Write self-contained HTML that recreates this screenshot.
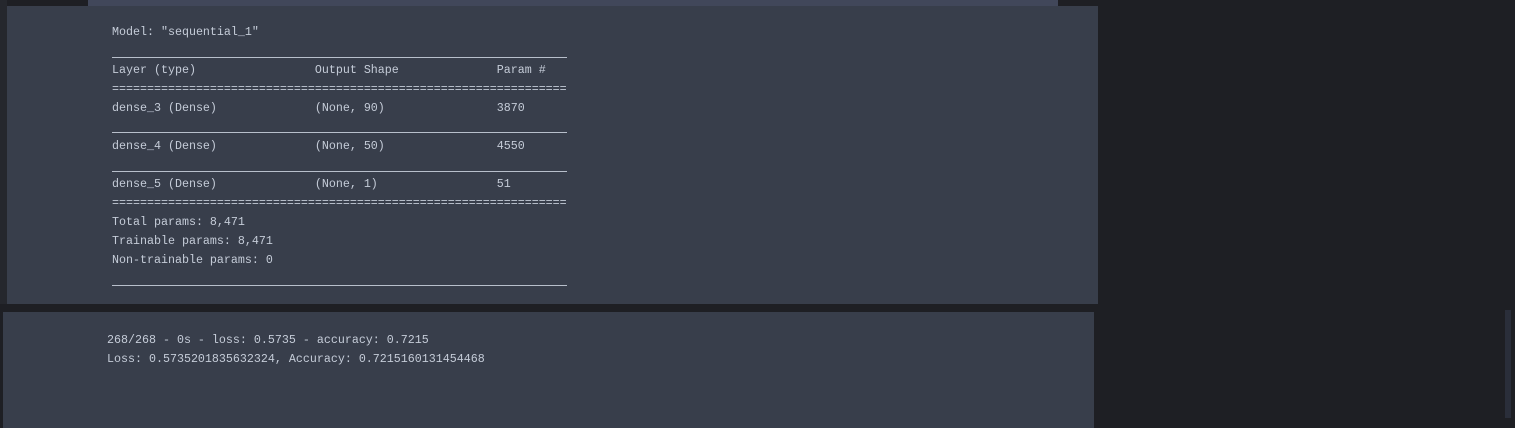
<!DOCTYPE html>
<html><head><meta charset="utf-8"><style>
html,body{margin:0;padding:0;width:1515px;height:428px;overflow:hidden;background:#1e1f24;position:relative}
.p{position:absolute;background:#383e4b}
.t{position:absolute;font-family:"Liberation Mono",monospace;font-size:11.67px;line-height:14px;color:#c5ccd8;white-space:pre}
.r{position:absolute;left:112px;width:455px;height:1px;background:#b8bfcb}
</style></head><body>
<div class="p" style="left:0;top:0;width:7px;height:305px;background:#25272d"></div>
<div class="p" style="left:88px;top:0;width:970px;height:6px;background:#41475a"></div>
<div class="p" style="left:7px;top:6px;width:1091px;height:298px"></div>
<div class="p" style="left:0;top:304px;width:1100px;height:8px;background:#1e1f24"></div>
<div class="p" style="left:3px;top:312px;width:1091px;height:116px"></div>
<div class="p" style="left:1505px;top:310px;width:6px;height:108px;background:#2a2e3a"></div>

<div class="t" style="left:112px;top:25px">Model: "sequential_1"</div>
<div class="r" style="top:57px"></div>
<div class="t" style="left:112px;top:63px">Layer (type)                 Output Shape              Param #</div>
<div class="t" style="left:112px;top:82px">=================================================================</div>
<div class="t" style="left:112px;top:101px">dense_3 (Dense)              (None, 90)                3870</div>
<div class="r" style="top:132px"></div>
<div class="t" style="left:112px;top:139px">dense_4 (Dense)              (None, 50)                4550</div>
<div class="r" style="top:171px"></div>
<div class="t" style="left:112px;top:177px">dense_5 (Dense)              (None, 1)                 51</div>
<div class="t" style="left:112px;top:196px">=================================================================</div>
<div class="t" style="left:112px;top:215px">Total params: 8,471</div>
<div class="t" style="left:112px;top:234px">Trainable params: 8,471</div>
<div class="t" style="left:112px;top:253px">Non-trainable params: 0</div>
<div class="r" style="top:285px"></div>

<div class="t" style="left:107px;top:333px">268/268 - 0s - loss: 0.5735 - accuracy: 0.7215</div>
<div class="t" style="left:107px;top:352px">Loss: 0.5735201835632324, Accuracy: 0.7215160131454468</div>
</body></html>
